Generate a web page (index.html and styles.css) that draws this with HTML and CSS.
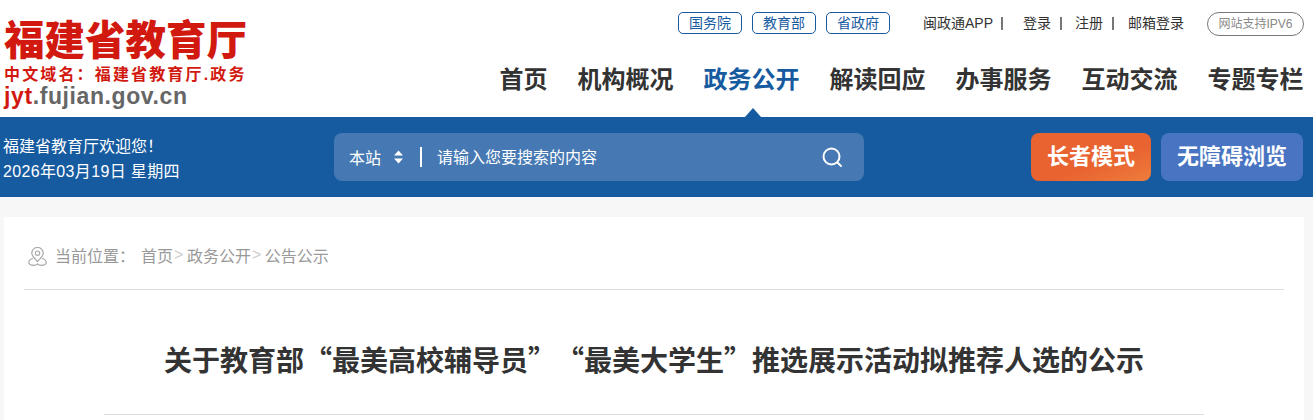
FILE: index.html
```html
<!DOCTYPE html>
<html lang="zh-CN">
<head>
    <meta charset="UTF-8">
    <title>福建省教育厅</title>
    <link rel="stylesheet" href="styles.css">
</head>
<body>
    <header class="top">
        <div class="logo">
            <div class="logo-name">福建省教育厅</div>
            <div class="logo-cn">中文域名：福建省教育厅.政务</div>
            <div class="logo-url"><span class="red">jyt</span>.fujian.gov.cn</div>
        </div>
        <div class="top-right">
            <div class="links">
                <a class="pill">国务院</a>
                <a class="pill">教育部</a>
                <a class="pill">省政府</a>
                <a class="txt app">闽政通APP</a>
                <a class="txt">登录</a>
                <a class="txt">注册</a>
                <a class="txt last">邮箱登录</a>
                <a class="ipv6">网站支持IPV6</a>
            </div>
            <nav class="nav">
                <a>首页</a>
                <a>机构概况</a>
                <a class="on">政务公开</a>
                <a>解读回应</a>
                <a>办事服务</a>
                <a>互动交流</a>
                <a>专题专栏</a>
            </nav>
        </div>
    </header>

    <div class="band">
        <div class="welcome">
            <p>福建省教育厅欢迎您！</p>
            <p class="date">2026年03月19日 星期四</p>
        </div>
        <div class="search">
            <span class="scope">本站</span>
            <svg class="updown" width="9" height="14" viewBox="0 0 9 14"><path d="M4.5 0.5 9 5.5H0ZM4.5 13.5 0 8.5H9Z" fill="#fff"/></svg>
            <span class="sep"></span>
            <span class="hint">请输入您要搜索的内容</span>
            <svg class="glass" width="22" height="22" viewBox="0 0 22 22" fill="none" stroke="#fff" stroke-width="2"><circle cx="10.5" cy="10.5" r="8"/><path d="M16.5 16.5 20 20" stroke-linecap="round"/></svg>
        </div>
        <a class="btn orange">长者模式</a>
        <a class="btn blue">无障碍浏览</a>
    </div>

    <main class="card">
        <div class="crumb">
            <svg width="19" height="19" viewBox="0 0 19 19" fill="none" stroke="#a8a8a8" stroke-width="1.2"><path d="M9.5 14.5C6.6 11.4 3.8 9.2 3.8 6.2A5.7 5.7 0 0 1 15.2 6.2C15.2 9.2 12.4 11.4 9.5 14.5Z"/><circle cx="9.5" cy="6.2" r="2.2"/><path d="M5 11.2C2.4 12.2 0.8 13.6 0.8 15.2 0.8 17 3 18.3 6 18.3 7.5 18.3 8.6 17.8 9.5 16.8 10.4 17.8 11.5 18.3 13 18.3 16 18.3 18.2 17 18.2 15.2 18.2 13.6 16.6 12.2 14 11.2"/></svg>
            <span class="here">当前位置：</span>
            <a>首页</a><i>&gt;</i>
            <a>政务公开</a><i>&gt;</i>
            <a>公告公示</a>
        </div>
        <h1>关于教育部“最美高校辅导员”“最美大学生”推选展示活动拟推荐人选的公示</h1>
        <div class="rule"></div>
    </main>
</body>
</html>
```

FILE: styles.css
```css
html, body {
    margin: 0;
    height: 420px;
    overflow: hidden;
}
body {
    background: #f7f7f7;
    font-family: "Liberation Sans", "Noto Sans CJK SC", sans-serif;
    color: #333;
}
p, h1 {
    margin: 0;
}

.top {
    display: flex;
    justify-content: space-between;
    height: 117px;
    padding: 0 9px 0 4px;
    background: #fff;
}
.logo {
    width: 300px;
    padding-top: 18px;
}
.logo-name {
    font-size: 40.5px;
    font-weight: 900;
    line-height: 47px;
    color: #d2190f;
    white-space: nowrap;
}
.logo-cn {
    font-size: 16px;
    font-weight: 700;
    line-height: 20px;
    letter-spacing: 2.15px;
    color: #d2190f;
    white-space: nowrap;
}
.logo-url {
    font-size: 23px;
    font-weight: 700;
    line-height: 23px;
    letter-spacing: 0.6px;
    color: #666;
}
.red {
    color: #d2190f;
}

.top-right {
    display: flex;
    flex-direction: column;
    align-items: flex-end;
}
.links {
    display: flex;
    align-items: center;
    height: 22px;
    margin-top: 12px;
    font-size: 14px;
}
.pill {
    width: 62px;
    height: 20px;
    margin-right: 10px;
    border: 1px solid #165a9f;
    border-radius: 5px;
    text-align: center;
    line-height: 20px;
    color: #165a9f;
}
.txt {
    padding-right: 9px;
    margin-right: 13px;
    border-right: 2px solid #777;
    line-height: 13px;
    color: #333;
}
.app {
    margin-left: 23px;
    padding-right: 8px;
    margin-right: 20px;
}
.last {
    border-right: 0;
    padding-right: 0;
    margin-left: 1px;
    margin-right: 23px;
}
.ipv6 {
    width: 95px;
    height: 22px;
    margin-top: 2px;
    border: 1px solid #777;
    border-radius: 12px;
    text-align: center;
    line-height: 22px;
    font-size: 12px;
    color: #888;
}
.nav {
    display: flex;
    gap: 30px;
    margin: 27px 0.5px 0 0;
    font-size: 24px;
    font-weight: 700;
    line-height: 38px;
}
.nav a {
    position: relative;
}
.nav .on {
    color: #165a9f;
}
.nav .on::after {
    content: "";
    position: absolute;
    left: 41px;
    top: 47px;
    border: 8px solid transparent;
    border-top: 0;
    border-bottom: 9px solid #165a9f;
}

.band {
    display: flex;
    align-items: center;
    height: 80px;
    padding: 0 10px 0 3px;
    background: #165a9f;
    color: #fff;
}
.welcome {
    width: 331px;
    padding-top: 3px;
    font-size: 16px;
    line-height: 25px;
}
.date {
    letter-spacing: 0.35px;
}
.search {
    display: flex;
    align-items: center;
    width: 530px;
    height: 48px;
    margin-right: 167px;
    padding: 0 21px 0 15px;
    box-sizing: border-box;
    border-radius: 8px;
    background: #4679b3;
    font-size: 16px;
}
.updown {
    margin-left: 13px;
}
.sep {
    width: 2px;
    height: 20px;
    margin: 0 15px 0 17px;
    background: #fff;
}
.hint {
    flex: 1;
    margin-top: -2px;
}
.btn {
    height: 48px;
    border-radius: 8px;
    text-align: center;
    line-height: 48px;
    font-size: 22px;
    font-weight: 700;
}
.orange {
    width: 120px;
    margin-right: 10px;
    background: linear-gradient(160deg, #e96330 60%, #ee7d3c);
}
.blue {
    width: 142px;
    background: #4874c2;
}

.card {
    margin: 20px 9px 0 4px;
    padding: 0 20px;
    background: #fff;
    height: 203px;
}
.crumb {
    display: flex;
    align-items: center;
    height: 68px;
    padding: 4px 0 0 4px;
    border-bottom: 1px solid #ddd;
    font-size: 16px;
    color: #999;
}
.crumb svg {
    margin-top: 2px;
}
.here {
    margin: 0 6px 0 8px;
}
.crumb i {
    font-style: normal;
    color: #ccc;
    margin: 0 3.5px 0 1px;
}
.card h1 {
    padding-top: 51px;
    text-align: center;
    font-family: "Noto Sans CJK SC", sans-serif;
    text-spacing-trim: space-all;
    font-size: 28px;
    line-height: 36px;
    font-weight: 700;
}
.rule {
    height: 1px;
    margin: 37px 80px 0;
    background: #ddd;
}
```
